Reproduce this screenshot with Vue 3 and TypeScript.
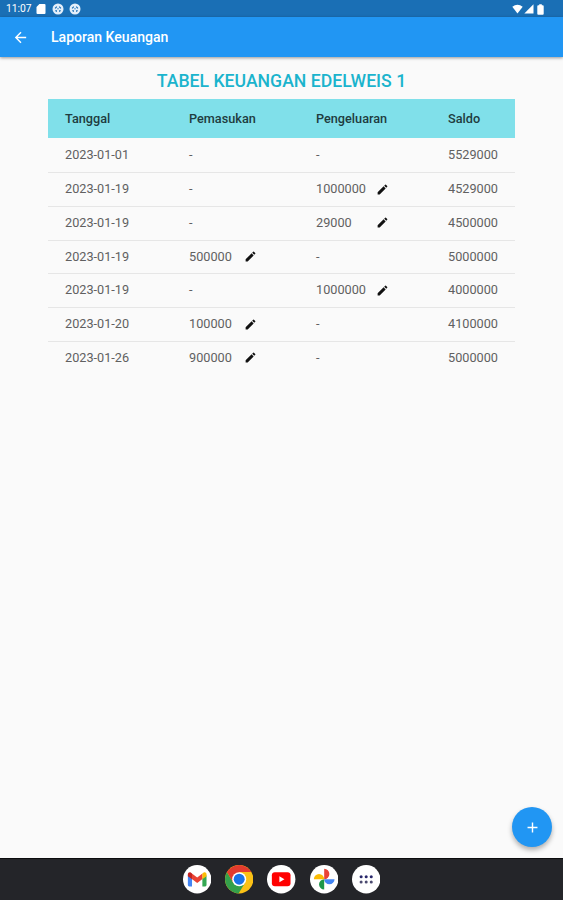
<script setup lang="ts">
interface Entry {
  date: string
  income: string
  expense: string
  balance: string
}

const columns: string[] = ['Tanggal', 'Pemasukan', 'Pengeluaran', 'Saldo']

const entries: Entry[] = [
  { date: '2023-01-01', income: '-', expense: '-', balance: '5529000' },
  { date: '2023-01-19', income: '-', expense: '1000000', balance: '4529000' },
  { date: '2023-01-19', income: '-', expense: '29000', balance: '4500000' },
  { date: '2023-01-19', income: '500000', expense: '-', balance: '5000000' },
  { date: '2023-01-19', income: '-', expense: '1000000', balance: '4000000' },
  { date: '2023-01-20', income: '100000', expense: '-', balance: '4100000' },
  { date: '2023-01-26', income: '900000', expense: '-', balance: '5000000' },
]

const pencil =
  'M3 17.25V21h3.75L17.81 9.94l-3.75-3.75L3 17.25zM20.71 7.04a1 1 0 0 0 0-1.41l-2.34-2.34a1 1 0 0 0-1.41 0l-1.83 1.83 3.75 3.75 1.83-1.83z'
</script>

<template>
  <div class="screen">
    <div class="status">
      <span class="clock">11:07</span>
      <svg class="sd" viewBox="0 0 10 12"><path d="M3.4 1H8.5Q9.5 1 9.5 2v8q0 1-1 1h-7q-1 0-1-1V4z" fill="#fff" /></svg>
      <svg v-for="n in 2" :key="n" class="round" viewBox="0 0 12 12">
        <circle cx="6" cy="6" r="5.5" fill="#e4effa" />
        <path d="M3.1 5.4 4.8 3.6M8.9 5.4 7.2 3.6" fill="none" stroke="#1a6fb5" stroke-width="1.2" />
        <path d="M3 7.2h2v1.6H3.9zM9 7.2H7v1.6h1.1z" fill="#1a6fb5" />
        <circle cx="6" cy="5.8" r=".8" fill="#4d90c9" />
      </svg>
      <span class="grow"></span>
      <svg class="wifi" viewBox="0 0 11 10"><path d="M5.5 9.5.3 2.8Q5.5-1.2 10.7 2.8z" fill="#fff" /></svg>
      <svg class="signal" viewBox="0 0 10 10"><path d="M9.5.3v9.2H.3z" fill="#fff" /></svg>
      <svg class="battery" viewBox="0 0 7 11"><path d="M2.2.3h2.6v1h1q.9 0 .9.9v7.6q0 .9-.9.9H1.2q-.9 0-.9-.9V2.2q0-.9.9-.9h1z" fill="#fff" /></svg>
    </div>

    <header class="appbar">
      <svg class="back" viewBox="0 0 24 24"><path d="M20 11H7.83l5.59-5.59L12 4l-8 8 8 8 1.41-1.41L7.83 13H20v-2z" fill="#fff" /></svg>
      <span class="heading">Laporan Keuangan</span>
    </header>

    <main class="content">
      <h1 class="title">TABEL KEUANGAN EDELWEIS 1</h1>
      <div class="table">
        <div class="row head">
          <span v-for="name in columns" :key="name">{{ name }}</span>
        </div>
        <div v-for="(entry, i) in entries" :key="i" class="row">
          <span>{{ entry.date }}</span>
          <span class="amount income">
            {{ entry.income }}
            <svg v-if="entry.income !== '-'" class="edit" viewBox="0 0 24 24"><path :d="pencil" /></svg>
          </span>
          <span class="amount expense">
            {{ entry.expense }}
            <svg v-if="entry.expense !== '-'" class="edit" viewBox="0 0 24 24"><path :d="pencil" /></svg>
          </span>
          <span>{{ entry.balance }}</span>
        </div>
      </div>
      <button class="fab" aria-label="Tambah">
        <svg viewBox="0 0 24 24"><path d="M19 13h-6v6h-2v-6H5v-2h6V5h2v6h6v2z" fill="#fff" /></svg>
      </button>
    </main>

    <nav class="dock">
      <svg viewBox="0 0 28 28">
        <circle cx="14" cy="14" r="14" fill="#fff" />
        <path d="M4.8 10v9.8q0 1.3 1.3 1.3h2.8v-8.3z" fill="#4285f4" />
        <path d="M23.2 10v9.8q0 1.3-1.3 1.3h-2.8v-8.3z" fill="#34a853" />
        <path d="M8.8 8.4v5.5l5.2 3.9 5.2-3.9V8.4L14 12.3z" fill="#ea4335" />
        <path d="M4.8 9.4v1.7l4.1 3V8.5l-1-.8C6.5 6.6 4.8 7.7 4.8 9.4z" fill="#c5221f" />
        <path d="M23.2 9.4v1.7l-4.1 3V8.5l1-.8c1.4-1.1 3.1 0 3.1 1.7z" fill="#fbbc04" />
      </svg>
      <svg viewBox="0 0 28 28">
        <circle cx="14" cy="14" r="14" fill="#fbc116" />
        <path d="M14 14 8.2 17.4 1.9 7A14 14 0 0 0 13.4 28L19.8 17.4z" fill="#34a04b" />
        <path d="M1.9 7A14 14 0 0 1 26.1 7H14L8.2 17.4z" fill="#e33b2e" />
        <circle cx="14" cy="14" r="6.9" fill="#fff" />
        <circle cx="14" cy="14" r="5.4" fill="#1a73e8" />
      </svg>
      <svg viewBox="0 0 28 28">
        <circle cx="14" cy="14" r="14" fill="#fff" />
        <rect x="4.8" y="7.2" width="18.4" height="13.8" rx="3" fill="#f00" />
        <path d="m12.2 11.2 5 2.9-5 2.9z" fill="#fff" />
      </svg>
      <svg viewBox="0 0 28 28">
        <circle cx="14" cy="14" r="14" fill="#fff" />
        <path d="M14 3.8a5.1 5.1 0 0 1 0 10.2z" fill="#ea4335" />
        <path d="M24.2 14a5.1 5.1 0 0 1-10.2 0z" fill="#4285f4" />
        <path d="M14 24.2a5.1 5.1 0 0 1 0-10.2z" fill="#1e9648" />
        <path d="M3.8 14a5.1 5.1 0 0 1 10.2 0z" fill="#fbbc04" />
      </svg>
      <svg viewBox="0 0 28 28">
        <circle cx="14" cy="14" r="14" fill="#fff" />
        <g fill="#29276b">
          <circle cx="9" cy="11.5" r="1.5" /><circle cx="14" cy="11.5" r="1.5" /><circle cx="19" cy="11.5" r="1.5" />
        </g>
        <g fill="#4b4a70">
          <circle cx="9" cy="16.8" r="1.5" /><circle cx="14" cy="16.8" r="1.5" /><circle cx="19" cy="16.8" r="1.5" />
        </g>
      </svg>
    </nav>
  </div>
</template>

<style>
body {
  margin: 0;
}
</style>

<style scoped>
.screen {
  display: flex;
  flex-direction: column;
  width: 563px;
  height: 900px;
  overflow: hidden;
  background: #fafafa;
  font-family: Roboto, "Liberation Sans", sans-serif;
}
.status {
  box-sizing: border-box;
  display: flex;
  flex: none;
  align-items: center;
  height: 17px;
  padding: 1px 19px 0 6px;
  background: #1a6fb5;
}
.clock {
  width: 30px;
  color: #fff;
  font-size: 10.3px;
  line-height: 16px;
}
.sd {
  width: 10px;
  height: 12px;
  margin-right: 6px;
}
.round {
  width: 12px;
  height: 12px;
  margin-right: 5px;
}
.grow {
  flex: 1;
}
.wifi {
  width: 11px;
  height: 10px;
}
.signal {
  width: 10px;
  height: 10px;
  margin: 0 3px 0 1px;
}
.battery {
  width: 7px;
  height: 11px;
}
.appbar {
  z-index: 1;
  display: flex;
  flex: none;
  align-items: center;
  height: 40px;
  background: #2196f3;
  box-shadow: 0 1px 3px rgba(0, 0, 0, 0.4);
}
.back {
  width: 17px;
  height: 17px;
  margin: 0 22px 0 12px;
}
.heading {
  color: #fff;
  font-size: 14.05px;
  font-weight: 500;
}
.content {
  position: relative;
  flex: 1;
}
.title {
  margin: 14px 0 8px;
  color: #1bb4cd;
  font-size: 17.65px;
  font-weight: 500;
  line-height: 20px;
  text-align: center;
}
.table {
  width: 467px;
  margin-left: 48px;
}
.row {
  box-sizing: border-box;
  display: grid;
  grid-template-columns: 124px 127px 132px 1fr;
  align-items: center;
  height: 33.75px;
  padding: 0 0 1px 17px;
  border-top: 1px solid #e6e6e6;
  color: #606060;
  font-size: 12.7px;
  line-height: 16px;
}
.row.head {
  height: 39.4px;
  padding-bottom: 0;
  border-top: 0;
  background: #80e0ea;
  color: #203c40;
  font-weight: 500;
}
.head + .row {
  border-top-color: transparent;
}
.amount {
  display: flex;
  align-items: center;
  justify-content: space-between;
}
.income {
  width: 67.5px;
}
.expense {
  width: 72.5px;
}
.edit {
  width: 13px;
  height: 13px;
  fill: #111;
}
.fab {
  position: absolute;
  right: 11px;
  bottom: 11px;
  display: flex;
  align-items: center;
  justify-content: center;
  width: 40px;
  height: 40px;
  padding: 0;
  border: 0;
  border-radius: 50%;
  background: #2196f3;
  box-shadow: 0 3px 5px rgba(0, 0, 0, 0.3);
}
.fab svg {
  width: 17px;
  height: 17px;
}
.dock {
  box-sizing: border-box;
  display: flex;
  flex: none;
  align-items: center;
  justify-content: center;
  gap: 14px;
  height: 42px;
  border-top: 1px solid #0c0c0e;
  background: #242529;
}
.dock svg {
  width: 28.4px;
  height: 28.4px;
}
</style>
